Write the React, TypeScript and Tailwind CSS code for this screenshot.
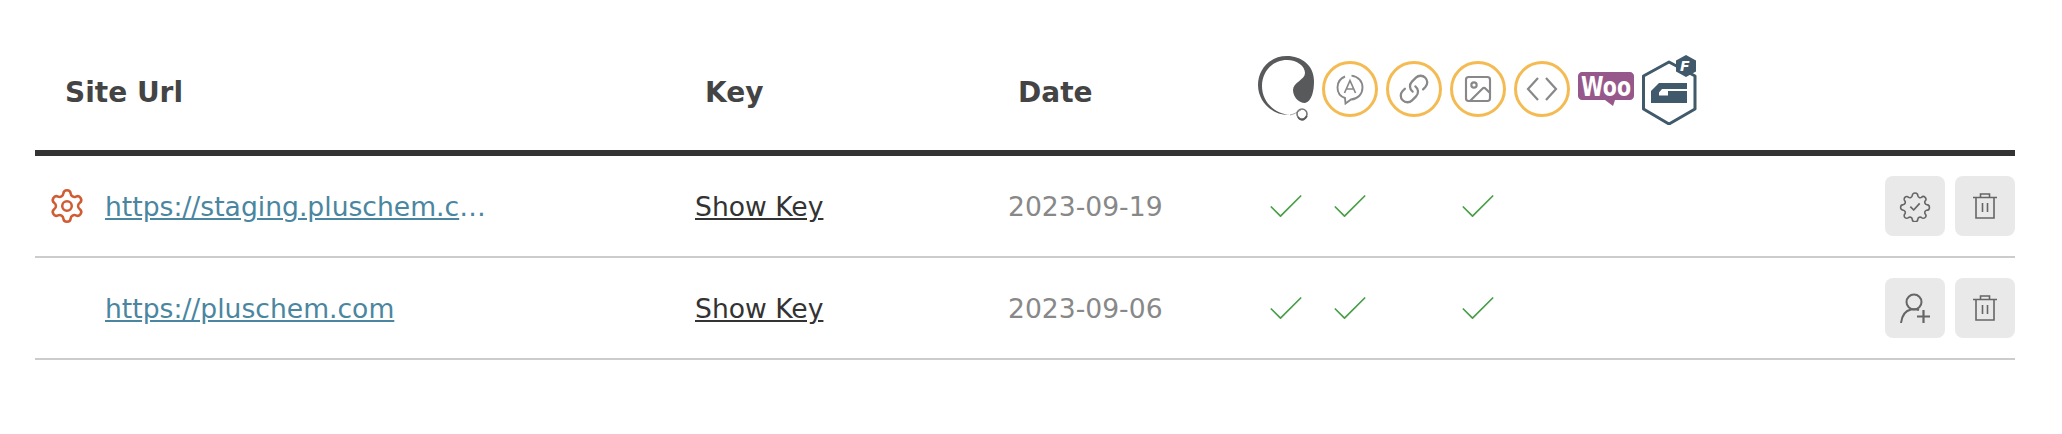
import { Check, Image, Link, Settings } from 'lucide-react'
import React from 'react'

const font = 'font-["DejaVu_Sans",Verdana,sans-serif]'

function SwirlLogo() {
  return (
    <svg width="64" height="72" viewBox="0 0 64 72" className="ml-[-4px] mr-[-4px] shrink-0">
      <path
        d="M51 50C58 48 60 38 60 28C60 12 47 3 33 3C16 3 4 16 4 32C4 50 20 63 36 62C22 61 8 50 8 33C8 18 19 7 33 7C43 7 51 13 51 20C51 27 39 29 39 37C39 44 45 50 51 50Z"
        fill="#58595b"
      />
      <path d="M36 62C40 61.5 43 59 47 57" fill="none" stroke="#a8a9ab" strokeWidth="1" />
      <circle cx="48" cy="61" r="5" fill="none" stroke="#77787a" strokeWidth="1.6" />
      <path d="M44 64C46 68 50 68 53 63" fill="none" stroke="#58595b" strokeWidth="1.6" />
    </svg>
  )
}

function TranslateIcon() {
  return (
    <svg width="28" height="32" viewBox="0 0 28 32" fill="none" stroke="#888" strokeWidth="1.9">
      <path d="M9 3.5C4 5.5 1.5 9.5 1.5 14.5C1.5 19.5 4.5 23.5 9 25L9.5 30.5L15 26.5C22 26 26.5 21 26.5 14.5C26.5 8.5 22.5 3.5 15.5 2.6" />
      <path d="M8.5 20L14 7.5L19.5 20M10.5 16H17.5" strokeWidth="1.7" />
    </svg>
  )
}

function CodeIcon() {
  return (
    <svg width="32" height="24" viewBox="0 0 32 24" fill="none" stroke="#888" strokeWidth="2.2">
      <path d="M12 1L2 12L12 23M20 1L30 12L20 23" />
    </svg>
  )
}

function WooLogo() {
  return (
    <svg width="56" height="34" viewBox="0 0 56 34" className="shrink-0">
      <path
        d="M4 0H52C54 0 56 2 56 4V24C56 26 54 28 52 28H37L35 34L27 28H4C2 28 0 26 0 24V4C0 2 2 0 4 0Z"
        fill="#96588a"
      />
      <text
        x="3"
        y="24"
        fill="#fff"
        fontSize="27"
        fontWeight="700"
        textLength="50"
        lengthAdjust="spacingAndGlyphs"
        fontFamily="'DejaVu Sans',sans-serif">
        Woo
      </text>
    </svg>
  )
}

function GravityLogo() {
  return (
    <svg width="60" height="72" viewBox="0 0 60 72" className="ml-[-2px] shrink-0">
      <path d="M29 9L55 23V56L29 71L3.5 56V23Z" fill="#fff" stroke="#40596b" strokeWidth="3" strokeLinejoin="round" />
      <path d="M47 30H19L11 38V50H47V38H28V42.5H19V39.5L22 36H47Z" fill="#40596b" />
      <path d="M46 2L56 7.5V18.5L46 24L36 18.5V7.5Z" fill="#40596b" />
      <text x="40" y="18" fill="#fff" fontSize="14" fontWeight="700" fontStyle="italic" fontFamily="'DejaVu Sans',sans-serif">
        F
      </text>
    </svg>
  )
}

function Ring({ children }: { children: React.ReactNode }) {
  return (
    <div className="flex h-[56px] w-[56px] shrink-0 items-center justify-center rounded-full border-[3px] border-[#f4bb53] bg-white">
      {children}
    </div>
  )
}

function GearCheck() {
  return (
    <svg width="32" height="32" viewBox="0 0 24 24" fill="none" stroke="#666" strokeWidth="1.3" strokeLinejoin="round">
      <path d="M9.67 4.14a2 2 0 0 1 4.66 0 2 2 0 0 0 2.98 1.24 2 2 0 0 1 3.01 3.01 2 2 0 0 0 1.24 2.98 2 2 0 0 1 0 4.66 2 2 0 0 0-1.24 2.98 2 2 0 0 1-3.01 3.01 2 2 0 0 0-2.98 1.24 2 2 0 0 1-4.66 0 2 2 0 0 0-2.98-1.24 2 2 0 0 1-3.01-3.01 2 2 0 0 0-1.24-2.98 2 2 0 0 1 0-4.66 2 2 0 0 0 1.24-2.98 2 2 0 0 1 3.01-3.01 2 2 0 0 0 2.98-1.24Z" transform="translate(1.1 0.6) scale(0.91)" />
      <path d="M8.5 12.5L11 15L15.5 10" />
    </svg>
  )
}

function UserAdd() {
  return (
    <svg width="32" height="32" viewBox="0 0 32 32" fill="none" stroke="#666" strokeWidth="2">
      <circle cx="15" cy="10" r="7.5" />
      <path d="M2 31C3 23 7 18.5 12 17.5C15 17 18 17.3 20 18" />
      <path d="M18 24.5H31M24.5 18V31" strokeWidth="2.2" />
    </svg>
  )
}

function Trash() {
  return (
    <svg width="24" height="26" viewBox="0 0 24 26" fill="none" stroke="#666" strokeWidth="1.6">
      <path d="M0 4.5H24M7.5 4.5V1H16.5V4.5M3 4.5V25H21V4.5M9.5 10V19M14.5 10V19" />
    </svg>
  )
}

function IconButton({ children }: { children: React.ReactNode }) {
  return (
    <button className="flex h-[60px] w-[60px] items-center justify-center rounded-[8px] bg-[#e9e9e9]">
      {children}
    </button>
  )
}

const rows = [
  {
    url: 'https://staging.pluschem.com',
    date: '2023-09-19',
    gear: true,
  },
  {
    url: 'https://pluschem.com',
    date: '2023-09-06',
    gear: false,
  },
]

export default function App() {
  return (
    <div className={`${font} h-[434px] bg-white pl-[35px] pr-[47px]`}>
      <div className="flex h-[156px] items-center border-b-[6px] border-[#333] pt-[36px]">
        <div className="w-[670px] shrink-0 pl-[30px] text-[28px] font-bold text-[#444]">Site Url</div>
        <div className="w-[313px] shrink-0 text-[28px] font-bold text-[#444]">Key</div>
        <div className="w-[240px] shrink-0 text-[28px] font-bold text-[#444]">Date</div>
        <div className="flex items-center gap-[8px] pb-[9px]">
          <SwirlLogo />
          <Ring>
            <TranslateIcon />
          </Ring>
          <Ring>
            <Link size={32} color="#888" strokeWidth={1.7} className="scale-x-[-1] rotate-90" />
          </Ring>
          <Ring>
            <Image size={32} color="#888" strokeWidth={1.6} />
          </Ring>
          <Ring>
            <CodeIcon />
          </Ring>
          <WooLogo />
          <GravityLogo />
        </div>
      </div>

      {rows.map((row) => (
        <div key={row.url} className="flex h-[102px] items-center border-b-2 border-[#ccc] text-[26.6px]">
          <div className="flex w-[660px] shrink-0 items-center pl-[13px]">
            <div className="flex h-[38px] w-[38px] shrink-0 items-center justify-center">
              {row.gear && <Settings size={38} color="#d05c33" strokeWidth={1.6} />}
            </div>
            <div className="ml-[19px] w-[382px] overflow-hidden pt-[2px] text-ellipsis whitespace-nowrap text-[#4a86a0]">
              <a href="#" className="underline">
                {row.url}
              </a>
            </div>
          </div>
          <div className="w-[313px] shrink-0 pt-[2px] text-[#333]">
            <a href="#" className="underline">
              Show Key
            </a>
          </div>
          <div className="w-[246px] shrink-0 pt-[2px] text-[#888]">{row.date}</div>
          <div className="flex pt-[2px] text-[#4a9f4a]">
            <div className="flex w-[64px] justify-center">
              <Check size={44} strokeWidth={0.95} />
            </div>
            <div className="flex w-[64px] justify-center">
              <Check size={44} strokeWidth={0.95} />
            </div>
            <div className="w-[64px]" />
            <div className="flex w-[64px] justify-center">
              <Check size={44} strokeWidth={0.95} />
            </div>
          </div>
          <div className="ml-auto flex gap-[10px]">
            <IconButton>{row.gear ? <GearCheck /> : <UserAdd />}</IconButton>
            <IconButton>
              <Trash />
            </IconButton>
          </div>
        </div>
      ))}
    </div>
  )
}
